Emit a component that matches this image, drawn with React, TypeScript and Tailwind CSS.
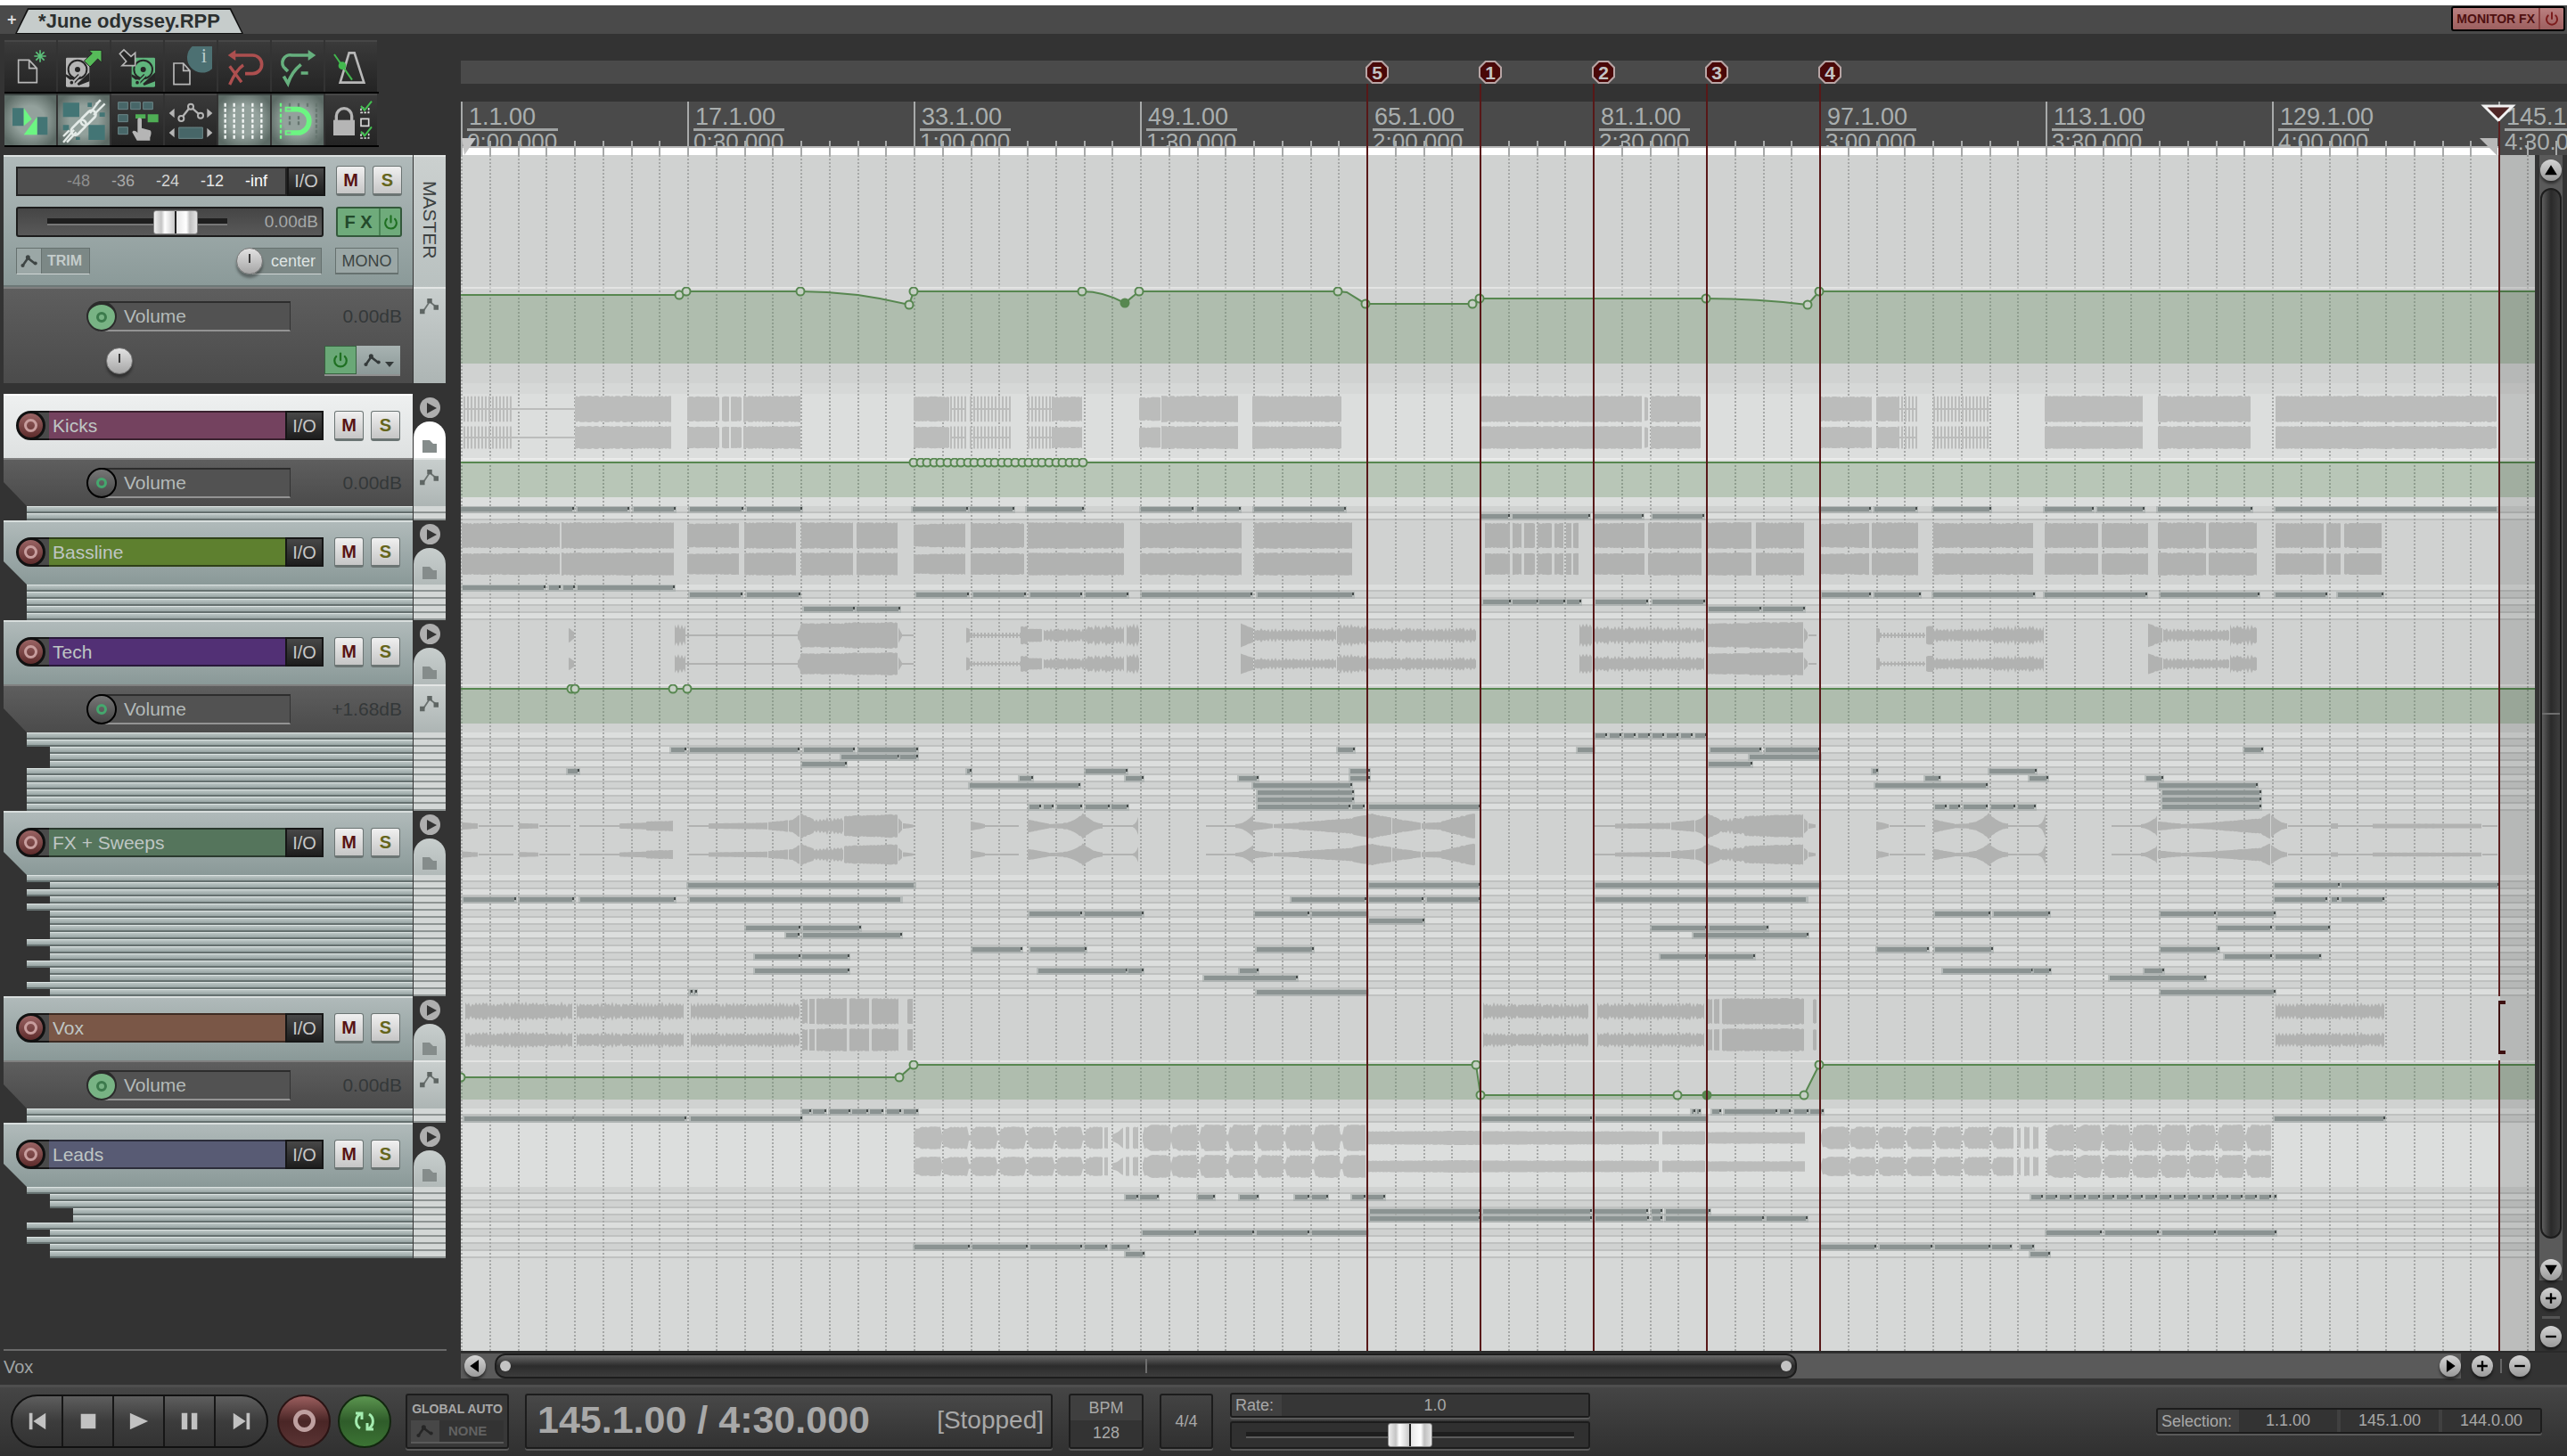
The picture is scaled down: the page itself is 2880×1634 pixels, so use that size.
import { Fragment, type ReactNode } from "react";
import { Power } from "lucide-react";

type Span = [number, number];
// start, end, amplitude at start, amplitude at end, shape
type Wave = [number, number, number, number, ("solid" | "comb" | "line" | "blob" | "rough")?];
type Point = { x: number; y: number; dot?: boolean; filled?: boolean; curve?: boolean };
type Child = { depth: 1 | 2 | 3; items: Span[] };
type Track = {
  name: string;
  color: string;
  selected?: boolean;
  waves: Wave[];
  envelope?: { value: string; active: boolean; points: Point[] };
  children: Child[];
};

const BAR = 15.875;
const barX = (bar: number) => Math.round((bar - 1) * BAR);

const noise = (n: number) => {
  const v = Math.sin(n * 12.9898) * 43758.5453;
  return v - Math.floor(v);
};

const dashes = (start: number, end: number, step: number): Span[] => {
  const out: Span[] = [];
  for (let x = start; x < end; x += step) out.push([x, Math.min(x + step - 5, end)]);
  return out;
};

const markers = [
  { label: "5", bar: 65 },
  { label: "1", bar: 73 },
  { label: "2", bar: 81 },
  { label: "3", bar: 89 },
  { label: "4", bar: 97 },
];

const rulerLabels = [
  { bar: 1, time: "0:00.000" },
  { bar: 17, time: "0:30.000" },
  { bar: 33, time: "1:00.000" },
  { bar: 49, time: "1:30.000" },
  { bar: 65, time: "2:00.000" },
  { bar: 81, time: "2:30.000" },
  { bar: 97, time: "3:00.000" },
  { bar: 113, time: "3:30.000" },
  { bar: 129, time: "4:00.000" },
  { bar: 145, time: "4:30.000" },
];

const masterPoints: Point[] = [
  { x: 0, y: 9 },
  { x: 245, y: 9, dot: true },
  { x: 253, y: 5, dot: true },
  { x: 381, y: 5, dot: true },
  { x: 503, y: 20, dot: true, curve: true },
  { x: 508, y: 5, dot: true },
  { x: 697, y: 5, dot: true },
  { x: 745, y: 18, dot: true, filled: true, curve: true },
  { x: 761, y: 5, dot: true },
  { x: 984, y: 5, dot: true },
  { x: 994, y: 6 },
  { x: 1015, y: 19, dot: true },
  { x: 1135, y: 19, dot: true },
  { x: 1143, y: 13, dot: true },
  { x: 1397, y: 13, dot: true },
  { x: 1511, y: 20, dot: true, curve: true },
  { x: 1524, y: 5, dot: true },
  { x: 4000, y: 5 },
];

const kickPoints: Point[] = [
  { x: 0, y: 5 },
  ...Array.from({ length: 26 }, (_, i) => ({ x: 508 + Math.round(i * 7.6), y: 5, dot: true })),
  { x: 4000, y: 5 },
];

const tracks: Track[] = [
  {
    name: "Kicks",
    color: "bg-[#74425f]",
    selected: true,
    waves: [
      [3, 58, 0.95, 0.95, "comb"], [58, 128, 0, 0, "line"], [128, 237, 1, 1], [254, 291, 0.95, 0.95], [293, 301, 0.95, 0.95],
      [303, 316, 0.95, 0.95], [317, 382, 1, 1], [508, 549, 0.95, 0.95], [549, 566, 0.95, 0.95, "comb"], [571, 617, 0.95, 0.95, "comb"],
      [636, 663, 0.95, 0.95, "comb"], [663, 697, 0.95, 0.95], [761, 785, 0.9, 0.9], [786, 873, 1, 1], [888, 989, 1, 1],
      [1145, 1326, 1, 1], [1328, 1332, 0.9, 0.9], [1335, 1391, 1, 1], [1525, 1583, 0.95, 0.95], [1588, 1612, 0.95, 0.95],
      [1612, 1634, 0.95, 0.95, "comb"], [1652, 1715, 0.95, 0.95, "comb"], [1777, 1887, 1, 1], [1904, 2008, 1, 1],
      [2036, 2284, 1, 1],
    ],
    envelope: { value: "0.00dB", active: false, points: kickPoints },
    children: [
      {
        depth: 1,
        items: [
          [0, 125], [131, 187], [194, 239], [257, 315], [321, 381], [507, 567], [571, 619], [635, 697], [763, 820], [826, 873],
          [890, 991], [1525, 1580], [1586, 1632], [1652, 1715], [1777, 1830], [1836, 1887], [1904, 2008], [2036, 2284],
        ],
      },
      { depth: 1, items: [[1145, 1175], [1180, 1265], [1272, 1325], [1337, 1393]] },
    ],
  },
  {
    name: "Bassline",
    color: "bg-[#5e802f]",
    waves: [
      [1, 111, 0.95, 0.95], [113, 239, 1, 1], [254, 313, 0.9, 0.95], [318, 377, 1, 1], [382, 441, 1, 1], [444, 491, 1, 1],
      [508, 567, 0.85, 0.95], [572, 633, 0.95, 0.95], [636, 745, 1, 1], [762, 877, 0.95, 1], [890, 1000, 1, 1],
      [1149, 1178, 0.95, 0.95], [1180, 1191, 0.95, 0.95], [1193, 1206, 0.95, 0.95], [1208, 1225, 0.95, 0.95],
      [1227, 1238, 0.95, 0.95], [1240, 1246, 0.95, 0.95], [1248, 1255, 0.95, 0.95], [1272, 1329, 0.95, 0.95], [1332, 1393, 1, 1],
      [1398, 1449, 1, 1], [1453, 1507, 1, 1], [1526, 1580, 0.9, 0.95], [1583, 1636, 1, 1], [1652, 1764, 0.95, 0.95],
      [1777, 1838, 0.95, 0.95], [1841, 1894, 0.95, 0.95], [1904, 1958, 1, 1], [1961, 2016, 1, 1], [2036, 2090, 0.95, 0.95],
      [2093, 2110, 0.95, 0.95], [2113, 2155, 0.95, 0.95],
    ],
    children: [
      { depth: 1, items: [[2, 93], [99, 110], [115, 126], [131, 238]] },
      {
        depth: 1,
        items: [
          [257, 314], [321, 379], [511, 568], [575, 632], [639, 695], [701, 747], [764, 886], [894, 1000], [1527, 1580],
          [1586, 1636], [1652, 1764], [1777, 1890], [1907, 2016], [2036, 2092], [2106, 2155],
        ],
      },
      { depth: 1, items: [[1147, 1176], [1180, 1207], [1210, 1237], [1241, 1255], [1273, 1330], [1337, 1394]] },
      { depth: 1, items: [[385, 440], [444, 491], [1400, 1457], [1461, 1506]] },
      { depth: 1, items: [] },
    ],
  },
  {
    name: "Tech",
    color: "bg-[#523075]",
    waves: [
      [121, 128, 0.6, 0.2], [240, 252, 0.95, 0.9, "rough"], [252, 378, 0, 0, "line"], [378, 382, 0.3, 0.9], [382, 430, 0.92, 0.92],
      [430, 491, 0.98, 1], [491, 495, 0.6, 0.1], [495, 508, 0, 0, "line"], [567, 571, 0.6, 0.5], [571, 628, 0.2, 0.2, "comb"],
      [628, 636, 0.7, 0.7], [636, 652, 0.5, 0.5], [654, 700, 0.55, 0.6, "rough"], [700, 745, 0.85, 0.85, "rough"],
      [747, 762, 0.95, 0.9, "rough"], [875, 890, 0.9, 0.5], [890, 983, 0.55, 0.5, "rough"], [983, 1017, 0.9, 0.85, "rough"],
      [1017, 1139, 0.65, 0.6, "rough"], [1255, 1269, 0.95, 0.95, "rough"], [1271, 1396, 0.75, 0.7, "rough"],
      [1398, 1446, 0.92, 0.92], [1446, 1507, 1, 1], [1507, 1512, 0.6, 0.1], [1512, 1521, 0, 0, "line"],
      [1588, 1592, 0.6, 0.5], [1592, 1643, 0.2, 0.2, "comb"], [1644, 1652, 0.7, 0.7], [1652, 1720, 0.55, 0.6, "rough"],
      [1720, 1777, 0.8, 0.75, "rough"], [1893, 1910, 0.9, 0.5], [1910, 1985, 0.55, 0.5, "rough"], [1985, 2016, 0.85, 0.8, "rough"],
    ],
    envelope: {
      value: "+1.68dB",
      active: false,
      points: [
        { x: 0, y: 5 }, { x: 124, y: 5, dot: true }, { x: 128, y: 5, dot: true }, { x: 238, y: 5, dot: true },
        { x: 254, y: 5, dot: true }, { x: 4000, y: 5 },
      ],
    },
    children: [
      { depth: 1, items: dashes(1273, 1398, 16) },
      { depth: 1, items: [] },
      { depth: 2, items: [[236, 251], [257, 378], [385, 440], [446, 511], [984, 1001], [1253, 1270], [1402, 1457], [1464, 1523], [2001, 2020]] },
      { depth: 2, items: [[427, 490], [493, 511], [1446, 1524]] },
      { depth: 2, items: [[383, 431], [1400, 1447]] },
      { depth: 1, items: [[120, 131], [568, 571], [701, 746], [998, 1018], [1584, 1588], [1715, 1766]] },
      { depth: 1, items: [[627, 640], [746, 764], [873, 893], [998, 1018], [1643, 1658], [1760, 1779], [1891, 1908]] },
      { depth: 1, items: [[571, 693], [889, 998], [1587, 1711], [1905, 2014]] },
      { depth: 1, items: [[894, 1000], [1909, 2018]] },
      { depth: 1, items: [[894, 1000], [1909, 2018]] },
      {
        depth: 1,
        items: [
          [638, 649], [654, 663], [669, 695], [701, 726], [730, 747], [894, 996], [1000, 1012], [1019, 1142], [1654, 1665],
          [1670, 1680], [1686, 1711], [1717, 1742], [1747, 1765], [1909, 2018],
        ],
      },
    ],
  },
  {
    name: "FX + Sweeps",
    color: "bg-[#55755c]",
    waves: [
      [1, 20, 0.28, 0.2], [20, 59, 0, 0, "line"], [65, 88, 0.22, 0.18], [88, 123, 0, 0, "line"], [133, 178, 0, 0, "line"],
      [178, 208, 0.2, 0.26], [208, 239, 0.36, 0.4], [254, 285, 0, 0, "line"], [278, 345, 0.2, 0.26], [345, 368, 0.3, 0.45],
      [368, 381, 0.45, 1], [381, 395, 1, 0.55], [395, 430, 0.6, 0.8, "rough"], [430, 491, 0.78, 0.9], [491, 496, 0.6, 0.25],
      [496, 508, 0.22, 0.1], [572, 588, 0.36, 0.15], [588, 626, 0, 0, "line"], [636, 660, 0.5, 0.18], [660, 676, 0.15, 0.2],
      [676, 698, 0.25, 1], [698, 720, 1, 0.2], [720, 755, 0, 0, "line"], [754, 761, 0.1, 0.9], [836, 869, 0, 0, "line"],
      [869, 889, 0.15, 0.85], [889, 912, 0.35, 0.15], [912, 940, 0.15, 0.25], [940, 1000, 0.3, 0.6], [1000, 1016, 0.65, 0.85],
      [1016, 1024, 0.95, 0.95], [1024, 1045, 0.9, 0.65], [1045, 1078, 0.6, 0.25], [1078, 1100, 0.22, 0.3],
      [1100, 1122, 0.35, 0.75], [1122, 1139, 0.75, 1], [1271, 1298, 0, 0, "line"], [1295, 1358, 0.18, 0.24],
      [1358, 1385, 0.3, 0.45], [1385, 1398, 0.45, 1], [1398, 1412, 1, 0.55], [1412, 1440, 0.6, 0.8, "rough"],
      [1440, 1507, 0.78, 0.9], [1507, 1512, 0.6, 0.25], [1512, 1521, 0.22, 0.1], [1588, 1603, 0.36, 0.12],
      [1603, 1643, 0, 0, "line"], [1652, 1676, 0.5, 0.18], [1676, 1692, 0.15, 0.2], [1692, 1714, 0.25, 1],
      [1714, 1736, 1, 0.2], [1736, 1771, 0, 0, "line"], [1770, 1778, 0.1, 0.9], [1852, 1885, 0, 0, "line"],
      [1885, 1904, 0.15, 0.85], [1904, 1930, 0.35, 0.18], [1930, 1960, 0.15, 0.25], [1960, 2020, 0.25, 0.6],
      [2020, 2031, 0.65, 1], [2031, 2050, 0.9, 0.2], [2050, 2145, 0, 0, "line"], [2098, 2107, 0.2, 0.2],
      [2145, 2268, 0.18, 0.18], [2268, 2285, 0, 0, "line"],
    ],
    children: [
      { depth: 1, items: [] },
      { depth: 2, items: [[255, 508], [1019, 1142], [1273, 1524], [2035, 2106], [2110, 2285]] },
      { depth: 1, items: [] },
      {
        depth: 2,
        items: [
          [3, 60], [66, 125], [134, 239], [257, 493], [932, 1014], [1019, 1078], [1084, 1142], [1273, 1509], [2035, 2092],
          [2099, 2105], [2110, 2156],
        ],
      },
      { depth: 1, items: [] },
      { depth: 2, items: [[638, 695], [700, 764], [891, 950], [955, 1016], [1654, 1714], [1720, 1781], [1907, 1967], [1971, 2034]] },
      { depth: 2, items: [[1019, 1079]] },
      { depth: 2, items: [[320, 379], [384, 447], [1336, 1396], [1401, 1465], [1971, 2030], [2036, 2095]] },
      { depth: 2, items: [[365, 378], [384, 493], [1383, 1510]] },
      { depth: 1, items: [] },
      { depth: 2, items: [[574, 628], [639, 700], [893, 955], [1589, 1645], [1654, 1717], [1907, 1971]] },
      { depth: 2, items: [[330, 379], [383, 434], [1346, 1396], [1400, 1450], [1979, 2030], [2036, 2085]] },
      { depth: 1, items: [] },
      { depth: 2, items: [[330, 434], [648, 746], [749, 764], [874, 893], [1663, 1762], [1765, 1782], [1889, 1909]] },
      { depth: 2, items: [[834, 937], [1850, 1956]] },
      { depth: 1, items: [] },
      { depth: 2, items: [[257, 258], [262, 263], [893, 1016], [1907, 2034]] },
    ],
  },
  {
    name: "Vox",
    color: "bg-[#7a5747]",
    waves: [
      [5, 125, 0.75, 0.75, "rough"], [130, 250, 0.7, 0.75, "rough"], [258, 380, 0.7, 0.75, "rough"], [383, 389, 0.95, 0.95],
      [391, 397, 0.95, 0.95], [399, 434, 1, 1], [436, 459, 1, 1], [461, 491, 1, 1], [501, 508, 0.95, 0.95],
      [1147, 1266, 0.7, 0.65, "rough"], [1275, 1395, 0.7, 0.75, "rough"], [1398, 1404, 0.95, 0.95], [1406, 1413, 0.95, 0.95],
      [1415, 1507, 1, 1], [1517, 1522, 0.95, 0.95], [2036, 2158, 0.7, 0.7, "rough"],
    ],
    envelope: {
      value: "0.00dB",
      active: true,
      points: [
        { x: 0, y: 19, dot: true }, { x: 492, y: 19, dot: true }, { x: 508, y: 5, dot: true }, { x: 1139, y: 5, dot: true },
        { x: 1144, y: 39, dot: true }, { x: 1365, y: 39, dot: true }, { x: 1398, y: 39, dot: true, filled: true },
        { x: 1507, y: 39, dot: true }, { x: 1524, y: 5, dot: true }, { x: 4000, y: 5 },
      ],
    },
    children: [
      { depth: 1, items: [[383, 391], [395, 408], [414, 435], [439, 455], [459, 472], [478, 492], [497, 511], [1381, 1383], [1387, 1389], [1404, 1412], [1418, 1475], [1480, 1490], [1496, 1510], [1514, 1527]] },
      { depth: 1, items: [[4, 125], [127, 251], [258, 381], [1146, 1267], [1273, 1397], [2035, 2157]] },
    ],
  },
  {
    name: "Leads",
    color: "bg-[#585b74]",
    waves: [
      [508, 720, 0.85, 0.85, "blob"], [722, 726, 0.8, 0.8], [731, 743, 0.3, 0.85], [746, 751, 0.85, 0.85], [754, 761, 0.85, 0.85],
      [765, 1016, 1, 1, "blob"], [1017, 1145, 0.5, 0.55], [1146, 1345, 0.52, 0.5], [1348, 1397, 0.52, 0.52],
      [1398, 1509, 0.45, 0.45], [1526, 1743, 0.85, 0.85, "blob"], [1746, 1750, 0.6, 0.8], [1754, 1760, 0.85, 0.85],
      [1764, 1770, 0.85, 0.85], [1779, 2032, 1, 1, "blob"],
    ],
    children: [
      { depth: 1, items: [] },
      { depth: 2, items: [[746, 758], [762, 781], [827, 844], [874, 893], [936, 950], [955, 971], [1000, 1013], [1018, 1035], ...dashes(1762, 2035, 16)] },
      { depth: 2, items: [] },
      { depth: 3, items: [[1020, 1142], [1147, 1267], [1272, 1330], [1336, 1346], [1352, 1400]] },
      { depth: 3, items: [[1020, 1142], [1147, 1267], [1273, 1331], [1337, 1346], [1352, 1460], [1465, 1509]] },
      { depth: 1, items: [] },
      { depth: 2, items: [[765, 823], [828, 888], [893, 950], [955, 1016], [1779, 1839], [1845, 1903], [1909, 1967], [1971, 2035]] },
      { depth: 1, items: [] },
      { depth: 2, items: [[509, 569], [574, 634], [639, 695], [700, 723], [730, 748], [1526, 1586], [1592, 1649], [1654, 1714], [1718, 1738], [1750, 1763]] },
      { depth: 2, items: [[746, 765], [1761, 1781]] },
    ],
  },
];

/* ---------- waveform and envelope drawing ---------- */

function wavePath(waves: Wave[], center: number, half: number) {
  let d = "";
  for (const [x0, x1, a0, a1, kind = "solid"] of waves) {
    if (kind === "line") {
      d += `M${x0} ${center - 1}H${x1}v2H${x0}z`;
      continue;
    }
    if (kind === "comb") {
      d += `M${x0} ${center - 1}H${x1}v2H${x0}z`;
      for (let x = x0; x < x1; x += 4) {
        const a = half * a0;
        d += `M${x} ${(center - a).toFixed(1)}h2V${(center + a).toFixed(1)}h-2z`;
      }
      continue;
    }
    const top: string[] = [];
    const bottom: string[] = [];
    for (let x = x0; x <= x1; x += 2) {
      const t = x1 === x0 ? 0 : (x - x0) / (x1 - x0);
      // steep swells bow inward instead of running straight
      const ease = a1 - a0 > 0.5 ? t * t : a0 - a1 > 0.5 ? 1 - (1 - t) * (1 - t) : t;
      let a = a0 + (a1 - a0) * ease;
      if (kind === "blob") {
        const p = ((x - x0) % 31.75) / 31.75;
        a *= p < 0.06 || p > 0.95 ? 0.25 : p < 0.2 ? 0.85 : 1;
      }
      const odd = (x - x0) % 4 === 0;
      const cut = kind === "rough" ? (odd ? 0.25 * noise(x) : 0.3 + 0.3 * noise(x)) : odd ? 0.12 * noise(x) : 0.02;
      a = Math.max(a * half * (1 - cut), 1);
      top.push(`${x} ${(center - a).toFixed(1)}`);
      bottom.unshift(`${x} ${(center + a).toFixed(1)}`);
    }
    d += `M${top.join("L")}L${bottom.join("L")}z`;
  }
  return d;
}

function WaveLane({ waves, light }: { waves: Wave[]; light: boolean }) {
  return (
    <div className={`h-[72px] shrink-0 ${light ? "bg-[#dcdedd]" : "bg-[#d0d2d1]"}`}>
      <svg className={`relative z-10 block h-full w-full ${light ? "fill-[#bbbcbb]" : "fill-[#b1b2b1]"}`}>
        <path d={wavePath(waves, 17, 15)} />
        <path d={wavePath(waves, 49, 13)} />
      </svg>
    </div>
  );
}

function EnvelopeLane({ points, light, tall }: { points: Point[]; light: boolean; tall?: boolean }) {
  const floor = tall ? 86 : 44;
  let line = "";
  points.forEach((p, i) => {
    if (i === 0) line += `M${p.x} ${p.y}`;
    else if (p.curve) line += `Q${(points[i - 1].x + p.x) / 2} ${points[i - 1].y} ${p.x} ${p.y}`;
    else line += `L${p.x} ${p.y}`;
  });
  return (
    <div className={`shrink-0 ${tall ? "h-[108px]" : "h-[54px]"} ${light ? "bg-[#dcdedd]" : "bg-[#d0d2d1]"}`}>
      <svg className="relative z-10 block h-full w-full">
        <rect width="100%" height="2" className="fill-white/40" />
        <path d={`${line}V${floor}H0z`} className="fill-[rgba(76,126,73,0.25)]" />
        <path d={line} className="fill-none stroke-[#578750]" strokeWidth="2" />
        {points.filter((p) => p.dot).map((p, i) => (
          <circle key={i} cx={p.x} cy={p.y} r="4.5" strokeWidth="2" className={`stroke-[#578750] ${p.filled ? "fill-[#578750]" : "fill-[#c6d0c5]"}`} />
        ))}
      </svg>
    </div>
  );
}

function ItemLane({ items, light }: { items: Span[]; light: boolean }) {
  return (
    <div className={`h-2 shrink-0 border-b-2 border-[#bfc1c0] ${light ? "bg-[#dcdedd]" : "bg-[#d0d2d1]"}`}>
      <svg className="relative z-10 block h-2 w-full">
        {items.map(([a, b], i) => (
          <g key={i}>
            <rect x={a - 2} y="0" width={b - a + 5} height="8" className="fill-[#a3aaa9]/60" />
            <rect x={a} y="1" width={b - a} height="5" className="fill-[#8b9392]" />
            {b - a < 200 && <rect x={b} y="1" width="2" height="3" className="fill-[#444a49]" />}
          </g>
        ))}
      </svg>
    </div>
  );
}

function Grid() {
  return (
    <svg className="pointer-events-none absolute inset-0 h-full w-full" shapeRendering="crispEdges">
      {Array.from({ length: 90 }, (_, i) => (
        <line key={i} x1={barX(1 + i * 2) + 1} x2={barX(1 + i * 2) + 1} y1="0" y2="100%" stroke="#a5a7a6" strokeWidth="2" strokeDasharray="2 2" />
      ))}
    </svg>
  );
}

/* ---------- toolbar ---------- */

function Disk({ x, fill }: { x: number; fill: string }) {
  return (
    <g transform={`translate(${x} 53)`}>
      <rect width="79" height="99" rx="4" fill={fill} />
      <circle cx="39" cy="40" r="31" fill="none" stroke="#262626" strokeWidth="6" />
      <circle cx="39" cy="40" r="9" fill="#262626" />
      <path d="M0 56v8l18 14 10-8zM79 50 38 88l4 6 37-14z" fill="#262626" />
      <path d="M46 60 24 82" stroke="#262626" strokeWidth="14" />
      <path d="M48 58 24 82" stroke={fill} strokeWidth="6" />
      <circle cx="19" cy="84" r="8" fill="#262626" stroke={fill} strokeWidth="5" />
    </g>
  );
}

const check = (y: number) => (
  <g>
    <path d={`M146 ${y - 4}v16h-26v-16h14`} fill="none" stroke="#d8d8d8" strokeWidth="5" strokeDasharray="8 4" />
    <path d={`M120 ${y - 10}l12 14L156 ${y - 26}`} fill="none" stroke="#42c050" strokeWidth="6" />
  </g>
);

const tools: { name: string; on?: boolean; icon: ReactNode }[] = [
  {
    name: "New project",
    icon: (
      <>
        <path d="M47 61h36l26 28v48H47zM83 61v28h26" fill="none" stroke="#b8b8b8" strokeWidth="5" />
        <path d="M120 28v40M100 48h40M106 34l28 28M134 34l-28 28" stroke="#5cc07a" strokeWidth="5" />
      </>
    ),
  },
  {
    name: "Open project",
    icon: (
      <>
        <Disk x={27} fill="#b5b5b5" />
        <path d="M104 28h43v42l-13-13-26 27-20-20 27-25z" fill="#56bb59" stroke="#262626" strokeWidth="3" />
      </>
    ),
  },
  {
    name: "Save project",
    icon: (
      <>
        <Disk x={68} fill="#5fb47c" />
        <path d="M28 40 42 27l24 22 14-12v43H36l14-14z" fill="#262626" stroke="#b5b5b5" strokeWidth="5" />
      </>
    ),
  },
  {
    name: "Project settings",
    icon: (
      <>
        <path d="M30 72h32l22 25v46H30zM62 72v25h22" fill="none" stroke="#b8b8b8" strokeWidth="5" />
        <path d="M92 15h67v76a42 42 0 0 1-67-76z" fill="#4c7072" />
        <text x="132" y="70" fontSize="68" textAnchor="middle" fill="#b9cccc" fontFamily="Liberation Serif, serif">i</text>
      </>
    ),
  },
  {
    name: "Undo",
    icon: (
      <>
        <path d="M48 45h67a30 30 0 0 1 0 62H90" fill="none" stroke="#ad4f4f" strokeWidth="11" />
        <path d="M32 45l26-18v36z" fill="#ad4f4f" />
        <path d="M38 82 78 136M84 78C66 90 50 116 38 144" fill="none" stroke="#ad4f4f" strokeWidth="10" />
      </>
    ),
  },
  {
    name: "Redo",
    icon: (
      <>
        <path d="M132 45H68a26 26 0 0 0-22 46l8 8M98 105h24" fill="none" stroke="#66b07e" strokeWidth="11" />
        <path d="M148 45l-26-18v36z" fill="#66b07e" />
        <path d="M40 116l14 24C62 116 78 92 98 76" fill="none" stroke="#66b07e" strokeWidth="11" />
      </>
    ),
  },
  {
    name: "Metronome",
    icon: (
      <>
        <path d="M80 37h18l32 100H50z" fill="none" stroke="#b8b8b8" strokeWidth="8" />
        <path d="M30 42 90 128" stroke="#42b84e" strokeWidth="6" />
        <circle cx="57" cy="80" r="13" fill="#42b84e" />
      </>
    ),
  },
  {
    name: "Auto-crossfade",
    on: true,
    icon: (
      <>
        <path d="M27 43h38v60H27zM110 73h35v60h-35z" fill="#437575" />
        <path d="M65 43 92 80 65 103zM65 133l45-60v60z" fill="#6cf582" />
      </>
    ),
  },
  {
    name: "Item grouping",
    on: true,
    icon: (
      <>
        <path d="M17 25h55v48H17zM103 100h55v50h-55zM17 100h20v18H17zM100 25h14v14h-14zM140 58h18v14h-18zM60 140h14v10H60z" fill="#437575" />
        <path d="M18 158 54 116M30 158 62 124M108 60 142 16M120 66 158 28M18 138l20-20M128 30l16-14" stroke="#e4ebe8" strokeWidth="7" />
        <g fill="none" stroke="#e4ebe8" strokeWidth="8" transform="rotate(-45 88 90)">
          <rect x="32" y="76" width="60" height="28" rx="14" />
          <rect x="78" y="76" width="60" height="28" rx="14" />
        </g>
      </>
    ),
  },
  {
    name: "Ripple editing",
    icon: (
      <>
        <path d="M23 23h32v24H23zM65 23h32v24H65zM107 23h32v24h-32zM23 65h32v24H23zM23 107h32v24H23z" fill="#476668" stroke="#6d8789" strokeWidth="3" />
        <path d="M122 64h36v27h-36zM81 64h34v14H81z" fill="#4fae55" />
        <path d="M88 82c0-8 14-8 14 0v28l28 8c6 3 4 16 0 24v10H86L70 124c2-8 12-6 18 2z" fill="#b5b5b5" />
      </>
    ),
  },
  {
    name: "Move envelopes with items",
    icon: (
      <>
        <path d="M61 70 80 46M94 45l18 16" stroke="#b5b5b5" strokeWidth="7" />
        <g fill="none" stroke="#b5b5b5" strokeWidth="6">
          <circle cx="55" cy="78" r="9" />
          <circle cx="87" cy="38" r="9" />
          <circle cx="120" cy="68" r="9" />
        </g>
        <path d="M14 60l18-16v32zM160 60l-18-16v32zM14 126l18-16v32zM160 126l-18-16v32z" fill="#b5b5b5" />
        <path d="M47 108h80v37H47z" fill="#476668" stroke="#6d8789" strokeWidth="3" />
      </>
    ),
  },
  {
    name: "Grid lines",
    on: true,
    icon: <path d="M23 26v122M53 26v122M83 26v122M115 26v122M145 26v122" stroke="#f4f7f6" strokeWidth="7" strokeDasharray="12 6" />,
  },
  {
    name: "Snap",
    on: true,
    icon: (
      <>
        <path d="M60 26v14M90 26v14M120 26v14M60 70v34M90 70v34M150 26v122" stroke="#66756f" strokeWidth="7" strokeDasharray="12 6" />
        <path d="M30 26v122" stroke="#6cf582" strokeWidth="7" strokeDasharray="12 6" />
        <path d="M44 47h42a38 38 0 0 1 0 79H44" fill="none" stroke="#6cf582" strokeWidth="17" />
        <path d="M50 47h14M50 126h14" stroke="#8fae9c" strokeWidth="7" />
      </>
    ),
  },
  {
    name: "Lock settings",
    icon: (
      <>
        <path d="M27 83h72v52H27z" fill="#b5b5b5" />
        <path d="M37 84V70a26 26 0 0 1 52 0v14" fill="none" stroke="#b5b5b5" strokeWidth="10" />
        {check(46)}
        <path d="M120 79h26v24h-26z" fill="none" stroke="#d8d8d8" strokeWidth="5" />
        {check(132)}
      </>
    ),
  },
];

function Toolbar() {
  return (
    <div className="grid grid-cols-[repeat(7,60px)] pt-[7px] pb-[9px] pl-[5px]">
      {tools.map((t) => (
        <div key={t.name} className="h-[60px] border-b-2 border-black">
          <button
            aria-label={t.name}
            className={`block h-[58px] w-[58px] border-t-2 ${
              t.on
                ? "border-[#3c4442] bg-[radial-gradient(circle,#93a19c_40%,#5c6a65_85%)]"
                : "border-[#474747] bg-linear-to-b from-[#3a3a3a] to-[#242424]"
            }`}
          >
            <svg viewBox="0 0 174 168" className="block h-14 w-[58px]">{t.icon}</svg>
          </button>
        </div>
      ))}
    </div>
  );
}

/* ---------- track control panel ---------- */

function SquareButton({ label, tone }: { label: string; tone: string }) {
  return (
    <button className={`h-[34px] w-[33px] rounded-[3px] border border-[#6b7473] border-b-[3px] bg-linear-to-b from-[#f0f0f0] to-[#c6c6c6] text-xl leading-none font-bold ${tone}`}>
      {label}
    </button>
  );
}

function IoButton() {
  return <button className="h-[33px] w-[43px] border-2 border-[#161616] bg-linear-to-b from-[#484848] to-[#1e1e1e] text-xl leading-none text-[#c8c8c8]">I/O</button>;
}

function EnvelopeGlyph({ className }: { className?: string }) {
  return (
    <svg viewBox="0 0 24 22" className={className}>
      <path d="M4 17 12 5l9 7" fill="none" stroke="#6b7270" strokeWidth="2" />
      <path d="M0 14h6v6H0zM9 1h6v6H9zM17 9h6v6h-6z" fill="#5e6563" />
    </svg>
  );
}

function AutoGlyph({ className }: { className?: string }) {
  return (
    <svg viewBox="0 0 24 18" className={className} fill="currentColor">
      <path d="M3 15 10 5l9 7" fill="none" stroke="currentColor" strokeWidth="3" />
      <circle cx="3" cy="15" r="2.5" />
      <circle cx="10" cy="4" r="3" />
      <circle cx="20" cy="12" r="2.5" />
    </svg>
  );
}

function EnvelopePanel({ value, active, notch, tall }: { value: string; active: boolean; notch?: boolean; tall?: boolean }) {
  return (
    <div className={`flex shrink-0 ${tall ? "h-[108px]" : "h-[54px]"}`}>
      <div
        className={`flex flex-1 flex-col border-t-2 border-[#808080] bg-linear-to-b from-[#5e5e5e] to-[#4b4b4b] ${tall ? "gap-4 pt-3.5" : "justify-center"} ${
          notch ? "[clip-path:polygon(0_0,100%_0,100%_100%,26px_100%,0_27px)]" : ""
        }`}
      >
        <div className="flex items-center pr-3 pl-[93px]">
          <button
            aria-label="Bypass envelope"
            className={`z-10 flex h-[34px] w-[34px] items-center justify-center rounded-full border-2 ${
              active ? "border-[#2b2b2b] border-t-4 bg-[#78b384]" : "border-black bg-linear-to-b from-[#767676] to-[#474747]"
            }`}
          >
            <span className={`h-3 w-3 rounded-full border-3 ${active ? "border-[#3c7a4c]" : "border-[#45a86e]"}`} />
          </button>
          <span className="-ml-5 h-[34px] w-[215px] border-t-2 border-r border-b-2 border-t-[#2d2d2d] border-r-[#333] border-b-[#939393] bg-[#525252] pl-7 text-[21px] leading-[30px] text-[#b4bab9]">
            Volume
          </span>
          <span className="flex-1 text-right text-[21px] text-[#343839]">{value}</span>
        </div>
        {tall && (
          <div className="flex items-center justify-between pr-3.5 pl-[115px]">
            <Knob />
            <div className="flex border-b-2 border-[#909090]">
              <button aria-label="Envelope active" className="flex h-8 w-9 items-center justify-center border border-[#37613f] bg-[#6aa877] text-[#1f7022]">
                <Power size={18} strokeWidth={3} />
              </button>
              <button aria-label="Automation mode" className="flex h-8 w-[49px] items-center justify-center gap-1 bg-linear-to-b from-[#a8b3b2] to-[#8c9998] text-[#343a3a]">
                <AutoGlyph className="h-4 w-5" />
                <span className="mt-2.5 border-x-5 border-t-6 border-x-transparent border-t-[#343a3a]" />
              </button>
            </div>
          </div>
        )}
      </div>
      <div className="ml-px flex w-9 justify-center border-t-2 border-[#e3e6e5] bg-linear-to-b from-[#c8cecd] to-[#adb5b4] pt-2.5">
        <EnvelopeGlyph className="h-5 w-6" />
      </div>
    </div>
  );
}

function Knob() {
  return (
    <span className="z-10 flex h-[30px] w-[30px] shrink-0 justify-center rounded-full border border-[#777] bg-linear-to-b from-[#e2e2e2] to-[#a6a6a6] shadow-[0_4px_3px_rgba(0,0,0,0.35)]">
      <span className="mt-1.5 h-2.5 w-0.5 bg-[#3a3a3a]" />
    </span>
  );
}

const thumb =
  "appearance-none bg-transparent [&::-webkit-slider-thumb]:h-[27px] [&::-webkit-slider-thumb]:w-[50px] [&::-webkit-slider-thumb]:appearance-none [&::-webkit-slider-thumb]:rounded-[3px] [&::-webkit-slider-thumb]:border [&::-webkit-slider-thumb]:border-[#888] [&::-webkit-slider-thumb]:bg-[linear-gradient(90deg,#eee_0,#c4c4c4_8px,#fff_12px,#c8c8c8_23px,#222_23px,#222_25px,#e6e6e6_25px,#fff_36px,#c0c0c0_40px,#eee_50px)]";

function MasterPanel() {
  return (
    <>
      <div className="flex h-[148px] shrink-0">
        <div className="flex flex-1 flex-col gap-3 border-t-2 border-b-2 border-t-[#dde2e1] border-b-[#6d7877] bg-linear-to-b from-[#b0baba] to-[#8b9a99] pt-2.5 pr-3 pl-3.5">
          <div className="flex items-center">
            <div className="flex h-[33px] flex-1 items-center justify-between border-2 border-[#222] bg-[#4e4e4e] pr-5 pl-[55px] text-lg leading-none text-white">
              <span className="text-[#8f8f8f]">-48</span>
              <span className="text-[#a8a8a8]">-36</span>
              <span className="text-[#d4d4d4]">-24</span>
              <span className="text-[#e6e6e6]">-12</span>
              <span>-inf</span>
            </div>
            <IoButton />
            <div className="ml-3 flex gap-2">
              <SquareButton label="M" tone="text-[#581414]" />
              <SquareButton label="S" tone="text-[#65651c]" />
            </div>
          </div>
          <div className="flex items-center">
            <div className="relative flex h-[34px] flex-1 items-center justify-between rounded-[3px] border-2 border-[#1c1c1c] bg-linear-to-b from-[#454545] to-[#595959] pr-1 pl-2 text-[19px]">
              <span className="absolute left-[33px] h-2 w-[202px] border-b-2 border-[#777] bg-[#1e1e1e]" />
              <input type="range" aria-label="Master volume" defaultValue={72} className={`relative w-[250px] ${thumb}`} />
              <span className="text-[#a5a8a8]">0.00dB</span>
            </div>
            <div className="ml-3.5 flex w-[74px] rounded-[3px] border-2 border-[#33593b] bg-[#6fab7b]">
              <button className="h-[30px] flex-1 text-xl leading-none font-bold text-[#234a2b]">F X</button>
              <button aria-label="Master effects on" className="flex w-6 items-center justify-center border-l-2 border-[#4a8455] text-[#1f7022]">
                <Power size={17} strokeWidth={3} />
              </button>
            </div>
          </div>
          <div className="flex items-center justify-between">
            <button className="flex h-[30px] items-center border border-[#66716f] border-b-[#d0d6d5] bg-[#7c8886] pr-2 text-base font-bold text-[#c4cccb]">
              <span className="mr-1.5 flex h-full w-7 items-center justify-center border-r border-[#66716f] bg-[#9ba7a6] text-[#3e4544]">
                <AutoGlyph className="h-4 w-5" />
              </span>
              TRIM
            </button>
            <div className="flex items-center">
              <Knob />
              <span className="-ml-3 mr-[15px] h-[30px] w-[78px] border border-l-0 border-[#66716f] border-b-[#d0d6d5] bg-[#7c8886] pl-[21px] text-lg leading-7 text-[#dfe4e3]">center</span>
              <button className="h-[30px] w-[71px] border border-[#66716f] border-b-2 bg-[#9ba7a6] text-lg leading-none text-[#3c4443]">MONO</button>
              <span className="w-1" />
            </div>
          </div>
        </div>
        <div className="ml-px flex w-9 items-center justify-center border-t-2 border-[#e3e6e5] bg-linear-to-b from-[#cbd0cf] to-[#b9c1c0] pb-1 text-[21px] leading-none text-[#3c4141] [writing-mode:vertical-rl]">
          MASTER
        </div>
      </div>
      <EnvelopePanel value="0.00dB" active tall />
      <div className="h-3 shrink-0" />
    </>
  );
}

const indent = { 1: "ml-[26px]", 2: "ml-[52px]", 3: "ml-[78px]" };

function TrackPanel({ track }: { track: Track }) {
  return (
    <>
      <div className="flex h-[72px] shrink-0">
        <div
          className={`flex flex-1 items-center border-t-2 pb-[3px] pl-3.5 ${
            track.selected ? "border-white bg-linear-to-b from-[#eef0f0] to-[#dee1e1]" : "border-[#d8dedd] bg-linear-to-b from-[#b0baba] to-[#8a9998]"
          } ${track.envelope ? "" : "[clip-path:polygon(0_0,100%_0,100%_100%,26px_100%,0_46px)]"}`}
        >
          <button aria-label={`Arm ${track.name}`} className="z-10 flex h-[33px] w-[33px] items-center justify-center rounded-full border-3 border-[#111] bg-linear-to-b from-[#9a6464] to-[#5e2c2c]">
            <span className="h-[15px] w-[15px] rounded-full border-3 border-[#c79d9d]" />
          </button>
          <span className="-ml-4 h-[33px] w-5 border-y-2 border-[#161616] bg-[#4a4a4a]" />
          <input
            aria-label="Track name"
            defaultValue={track.name}
            className={`h-[33px] w-[265px] min-w-0 border-y-2 border-black/50 pl-1 text-[21px] leading-none text-[#bfc6c4] ${track.color}`}
          />
          <IoButton />
          <div className="ml-3 flex gap-2">
            <SquareButton label="M" tone="text-[#581414]" />
            <SquareButton label="S" tone="text-[#65651c]" />
          </div>
        </div>
        <div className="ml-px flex w-9 flex-col items-center justify-between pt-1">
          <button aria-label={`Show ${track.name} folder`} className="flex h-[23px] w-[23px] items-center justify-center rounded-full bg-[#aeaeae]">
            <span className="ml-1 border-y-6 border-l-11 border-y-transparent border-l-[#333]" />
          </button>
          <div className={`flex h-[41px] w-full items-end justify-center rounded-t-[18px] pb-1.5 ${track.selected ? "bg-white" : "bg-linear-to-b from-[#c8cecd] to-[#b2bab9]"}`}>
            <svg viewBox="0 0 16 14" className="h-3.5 w-4 fill-[#858c8b]">
              <path d="M0 0h8l4 4h4v10H0z" />
            </svg>
          </div>
        </div>
      </div>
      {track.envelope && <EnvelopePanel value={track.envelope.value} active={track.envelope.active} notch />}
      {track.children.map((c, i) => (
        <div key={i} className="flex h-2 shrink-0">
          <div className={`flex-1 border-t border-b-2 border-t-[#dbe2e1] border-b-[#65706f] bg-linear-to-b from-[#bcc6c5] to-[#98a5a4] ${indent[c.depth]}`} />
          <div className="ml-px w-9 border-b-2 border-[#8d9392] bg-[#d3d7d6]" />
        </div>
      ))}
    </>
  );
}

/* ---------- timeline ---------- */

function Ruler() {
  return (
    <>
      <div className="mt-[30px] h-[26px] bg-[#4a4a4a]">
        <div className="relative h-full">
          {markers.map((m) => (
            <button
              key={m.label}
              style={{ left: barX(m.bar) - 1 }}
              className="absolute top-0 z-30 h-[26px] w-[26px] bg-[#b8a5a5] p-0.5 [clip-path:polygon(28%_0,72%_0,100%_28%,100%_72%,72%_100%,28%_100%,0_72%,0_28%)]"
            >
              <span className="flex h-full w-full items-center justify-center bg-[#4a0808] text-[21px] leading-none font-bold text-[#c4c4c4] [clip-path:polygon(28%_0,72%_0,100%_28%,100%_72%,72%_100%,28%_100%,0_72%,0_28%)]">
                {m.label}
              </span>
            </button>
          ))}
        </div>
      </div>
      <div className="relative mt-5 h-[60px] overflow-hidden bg-[#4a4a4a] text-[#a9aeae]">
        {rulerLabels.map((r) => (
          <div key={r.bar} style={{ left: barX(r.bar) + 7 }} className="absolute top-0.5 whitespace-nowrap">
            <div className="h-[31px] w-[102px] border-b-[3px] border-[#a0a3a3] pl-0.5 text-[27px] leading-[30px]">{r.bar}.1.00</div>
            <div className="text-[26px] leading-6">{r.time}</div>
          </div>
        ))}
        {/* time selection strip */}
        <div className="absolute top-[50px] left-0 h-2.5 w-[2286px] border-t-2 border-[#b9b9b9] bg-white" />
        <svg className="absolute inset-0 h-full w-full" shapeRendering="crispEdges">
          {Array.from({ length: 90 }, (_, i) => (
            <rect key={i} x={barX(1 + i * 2)} y={i % 8 ? 44 : 0} width="2" height={i % 8 ? 16 : 60} fill="#a8aaaa" />
          ))}
        </svg>
        <svg className="absolute inset-0 h-full w-full">
          <path d="M1 41h16L4 60" fill="#c4c4c4" />
          <path d="M2285 41h-20l20 20z" fill="#b8b8b8" />
          <path d="M2270 5h32l-16 16z" fill="#4f2626" stroke="#f2f2f2" strokeWidth="3" />
        </svg>
      </div>
    </>
  );
}

function Arrange() {
  let n = 0;
  return (
    <div className="relative flex flex-1 flex-col overflow-hidden bg-[#d6d8d7]">
      <Grid />
      <div className="h-[148px] shrink-0 bg-[#d0d2d1]" />
      <EnvelopeLane points={masterPoints} light={false} tall />
      <div className="h-3 shrink-0" />
      {tracks.map((t) => {
        const light = n++ % 2 === 0;
        return (
          <Fragment key={t.name}>
            <WaveLane waves={t.waves} light={light} />
            {t.envelope && <EnvelopeLane points={t.envelope.points} light={light} />}
            {t.children.map((c, i) => (
              <ItemLane key={i} items={c.items} light={n++ % 2 === 0} />
            ))}
          </Fragment>
        );
      })}
      <div className="absolute inset-y-0 right-0 left-[2287px] z-20 bg-black/12" />
    </div>
  );
}

function RoundButton({ label, children }: { label: string; children: ReactNode }) {
  return (
    <button aria-label={label} className="flex h-6 w-6 shrink-0 items-center justify-center rounded-full bg-linear-to-b from-[#d4d4d4] to-[#9a9a9a] shadow-[0_3px_3px_rgba(0,0,0,0.5)]">
      <svg viewBox="0 0 12 12" className="h-3.5 w-3.5 fill-black stroke-black">{children}</svg>
    </button>
  );
}

const plus = <path d="M6 1v10M1 6h10" strokeWidth="2" />;
const minus = <path d="M1 6h10" strokeWidth="2" />;

function Timeline() {
  return (
    <div className="flex min-w-0 flex-1 flex-col">
      <div className="relative flex min-h-0 flex-1 flex-col overflow-hidden">
        <Ruler />
        <div className="flex min-h-0 flex-1">
          <Arrange />
          <div className="flex w-9 flex-col items-center gap-2 pb-1">
            <div className="flex w-[26px] flex-1 flex-col items-center bg-[#5a5a5a] pt-[5px]">
              <RoundButton label="Scroll up"><path d="M6 2 11 10H1z" /></RoundButton>
              <div className="mt-2 mb-[23px] flex w-6 flex-1 items-center rounded-xl border-2 border-[#1c1c1c] bg-linear-to-r from-[#5e5e5e] via-[#2a2a2a] to-[#3e3e3e]">
                <span className="h-0.5 w-full bg-[#6e6e6e]" />
              </div>
              <RoundButton label="Scroll down"><path d="M6 10 11 2H1z" /></RoundButton>
            </div>
            <RoundButton label="Zoom in vertically">{plus}</RoundButton>
            <span className="h-[3px] w-5 bg-[#555]" />
            <RoundButton label="Zoom out vertically">{minus}</RoundButton>
          </div>
        </div>
        {markers.map((m) => (
          <div key={m.label} style={{ left: barX(m.bar) }} className="absolute top-14 bottom-0 z-20 w-0.5 bg-[#581818]" />
        ))}
        <div className="absolute top-[98px] bottom-0 left-[2286px] z-20 w-0.5 bg-[#5b1f1f]" />
        {/* edit cursor bracket on the focused track */}
        <div className="absolute top-[1080px] left-[2286px] z-30 h-[72px] w-0.5 bg-[#d0d2d1]" />
        <div className="absolute top-[1085px] left-[2286px] z-30 h-[60px] w-2 border-y-4 border-l-2 border-[#3d1010]" />
      </div>
      <div className="flex h-[38px] items-center border-t-2 border-[#2a2a2a] pr-[41px] pb-1.5">
        <div className="flex h-7 flex-1 items-center bg-[#5a5a5a] pl-1">
          <RoundButton label="Scroll left"><path d="M2 6 9 1v10z" /></RoundButton>
          <div className="ml-2.5 flex h-7 w-[1461px] items-center justify-between rounded-xl border-2 border-[#1c1c1c] bg-linear-to-b from-[#6a6a6a] via-[#2c2c2c] to-[#3c3c3c] px-1">
            <span className="h-3 w-3 rounded-full bg-[#c4c4c4]" />
            <span className="h-4 w-0.5 bg-[#6e6e6e]" />
            <span className="h-3 w-3 rounded-full bg-[#c4c4c4]" />
          </div>
          <div className="flex-1" />
          <RoundButton label="Scroll right"><path d="M10 6 3 1v10z" /></RoundButton>
        </div>
        <div className="ml-3 flex items-center gap-2">
          <RoundButton label="Zoom in">{plus}</RoundButton>
          <span className="h-4 w-0.5 bg-[#666]" />
          <RoundButton label="Zoom out">{minus}</RoundButton>
        </div>
      </div>
    </div>
  );
}

/* ---------- transport ---------- */

const transport: { name: string; d: string }[] = [
  { name: "Go to start", d: "M3 3h4v20H3zM23 3v20L8 13z" },
  { name: "Stop", d: "M4 4h18v18H4z" },
  { name: "Play", d: "M2 3l22 10L2 23z" },
  { name: "Pause", d: "M3 3h7v20H3zM15 3h7v20h-7z" },
  { name: "Go to end", d: "M19 3h4v20h-4zM3 3v20l15-10z" },
];

const well = "rounded-[3px] border-2 border-[#1c1c1c] shadow-[0_2px_0_#595959]";

function Transport() {
  return (
    <div className="flex h-20 shrink-0 items-center border-t-[3px] border-[#4e4e4e] bg-linear-to-b from-[#454545] to-[#303030] pr-7 pb-0.5 pl-3 text-lg text-[#a8a8a8]">
      <div className="flex h-[60px] shrink-0 overflow-hidden rounded-full border-2 border-[#111] bg-linear-to-b from-[#5e5e5e] via-[#3c3c3c] via-50% to-[#333]">
        {transport.map((b) => (
          <button key={b.name} aria-label={b.name} className="flex w-[57px] items-center justify-center border-r-2 border-[#161616] last:border-r-0">
            <svg viewBox="0 0 26 26" className="h-6 w-[26px] fill-[#c2c2c2]"><path d={b.d} /></svg>
          </button>
        ))}
      </div>
      <button aria-label="Record" className="ml-2.5 flex h-[60px] w-[60px] shrink-0 items-center justify-center rounded-full border-2 border-[#2a1414] bg-linear-to-b from-[#9c5f5f] via-[#4a2626] via-50% to-[#5a3434]">
        <span className="h-[25px] w-[25px] rounded-full border-5 border-[#bfa0a0]" />
      </button>
      <button aria-label="Repeat" className="ml-2 flex h-[60px] w-[60px] shrink-0 items-center justify-center rounded-full border-2 border-[#12260f] bg-linear-to-b from-[#5c9650] via-[#2f5c2a] via-50% to-[#3c7434]">
        <svg viewBox="0 0 28 28" className="h-7 w-7 fill-none stroke-[#a4ecb0]" strokeWidth="3">
          <path d="M9 22a9.500 9.500 0 0 1 0-16M19 6a9.500 9.500 0 0 1 0 16M4 5h7v7M24 23h-7v-7" />
        </svg>
      </button>
      <div className={`ml-4 flex h-[62px] w-[116px] shrink-0 flex-col items-center justify-between bg-[#383838] pt-1.5 pb-1 ${well}`}>
        <span className="text-sm leading-[18px] font-bold whitespace-nowrap">GLOBAL AUTO</span>
        <button className="flex h-[26px] w-[104px] items-center border-b-2 border-[#5a5a5a] bg-[#333] text-[15px] font-bold text-[#626262]">
          <span className="mr-2.5 flex h-full w-8 items-center justify-center bg-[#474747] text-[#262626]"><AutoGlyph className="h-4 w-5" /></span>
          NONE
        </button>
      </div>
      <div className={`ml-[18px] flex h-[62px] w-[592px] shrink-0 items-center justify-between bg-linear-to-b from-[#484848] to-[#323232] pr-2 pb-0.5 pl-3 ${well}`}>
        <span className="text-[43px] leading-none font-bold">145.1.00 / 4:30.000</span>
        <span className="text-[28px] leading-none">[Stopped]</span>
      </div>
      <div className={`ml-[18px] flex h-[62px] w-[84px] shrink-0 flex-col items-center bg-[#3f3f3f] ${well}`}>
        <label htmlFor="bpm" className="leading-7">BPM</label>
        <input id="bpm" defaultValue="128" className="h-[30px] w-full bg-[#333] text-center" />
      </div>
      <button className={`ml-[18px] h-[62px] w-[60px] shrink-0 bg-linear-to-b from-[#434343] to-[#303030] ${well}`}>4/4</button>
      <div className="ml-[19px] flex w-[404px] shrink-0 flex-col gap-1">
        <div className={`flex h-7 items-center bg-[#404040] pl-1 ${well}`}>
          <label htmlFor="rate" className="w-[52px]">Rate:</label>
          <input id="rate" defaultValue="1.0" className="h-full min-w-0 flex-1 bg-[#363636] text-center" />
        </div>
        <div className={`relative flex h-[31px] items-center bg-[#303030] ${well}`}>
          <span className="absolute inset-x-4 h-[7px] border-b-2 border-[#5a5a5a] bg-[#1e1e1e]" />
          <input type="range" aria-label="Play rate" defaultValue={50} className={`relative w-full ${thumb}`} />
        </div>
      </div>
      <div className={`ml-auto flex h-[29px] items-center gap-1 bg-[#404040] pl-1 ${well}`}>
        <span className="mr-1">Selection:</span>
        {["1.1.00", "145.1.00", "144.0.00"].map((v) => (
          <input key={v} aria-label="Selection position" defaultValue={v} className="h-full w-[110px] bg-[#333] text-center" />
        ))}
      </div>
    </div>
  );
}

export default function App() {
  return (
    <div className="flex h-screen flex-col overflow-hidden bg-[#333] font-['Liberation_Sans',Arial,sans-serif]">
      <div className="h-1.5 shrink-0 bg-white" />
      <div className="flex h-8 shrink-0 items-end justify-between bg-[#4a4a4a] pl-2">
        <div className="flex h-full items-end">
          <button aria-label="New tab" className="h-full w-[9px] text-lg leading-[28px] font-bold text-[#dcdcdc]">+</button>
          <div className="bg-[#111] px-0.5 pt-0.5 [clip-path:polygon(14px_0,calc(100%-14px)_0,100%_100%,0_100%)]">
            <button className="h-[26px] w-[252px] bg-[#c6cccb] text-[22px] leading-[22px] font-bold text-[#2c3030] [clip-path:polygon(13px_0,calc(100%-13px)_0,100%_100%,0_100%)]">
              *June odyssey.RPP
            </button>
          </div>
        </div>
        <div className="mr-0.5 mb-[3px] flex h-7 items-stretch rounded-[3px] border-2 border-black bg-linear-to-b from-[#bb8080] to-[#9c5f5f] text-[#4e1010]">
          <button className="px-1 text-sm leading-none font-bold">MONITOR FX</button>
          <button aria-label="Monitor effects on" className="flex w-7 items-center justify-center border-l-2 border-[#8a4040] text-[#7c1c1c]">
            <Power size={16} strokeWidth={3} />
          </button>
        </div>
      </div>
      <div className="flex min-h-0 flex-1">
        <div className="flex w-[517px] shrink-0 flex-col">
          <Toolbar />
          <div className="mr-4 ml-1 flex min-h-0 flex-1 flex-col overflow-hidden border-b-2 border-[#6a6a6a] pr-px">
            <MasterPanel />
            {tracks.map((t) => (
              <TrackPanel key={t.name} track={t} />
            ))}
          </div>
          <div className="h-[38px] pt-1 pl-1 text-xl text-[#a0a5a5]">Vox</div>
        </div>
        <Timeline />
      </div>
      <Transport />
    </div>
  );
}
